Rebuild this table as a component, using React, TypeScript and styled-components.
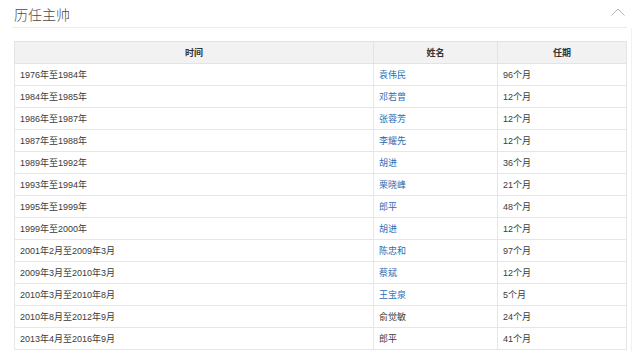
import React from "react";
import styled, { createGlobalStyle } from "styled-components";

const GlobalStyle = createGlobalStyle`
  html, body {
    margin: 0;
    padding: 0;
    background: #ffffff;
  }
  body {
    font-family: "Liberation Sans", Arial, "Noto Sans CJK SC", sans-serif;
    color: #333333;
  }
`;

const Page = styled.div`
  width: 619px;
  padding-left: 12px;
`;

const Header = styled.div`
  display: flex;
  align-items: center;
  justify-content: space-between;
  width: 615px;
  height: 28px;
  box-sizing: border-box;
  padding: 0 2px 0 2px;
  border-bottom: 1px solid #ececec;
`;

const Title = styled.h2`
  margin: 0;
  font-size: 14px;
  line-height: 24px;
  font-weight: 300;
  color: #4a4a4a;
  font-family: "Noto Sans CJK SC", sans-serif;
`;

const Toggle = styled.button`
  display: flex;
  align-items: center;
  border: 0;
  padding: 0;
  margin: 0 0 4px 0;
  background: transparent;
  cursor: pointer;
`;

const Body = styled.div`
  width: 617px;
  padding: 13px 0 0 2px;
  border-right: 1px solid #f2f2f2;
  min-height: 320px;
`;

const Table = styled.table`
  width: 612px;
  table-layout: fixed;
  border-collapse: collapse;
  font-size: 9px;
  font-family: "Liberation Sans", Arial, "Noto Sans CJK SC", sans-serif;
`;

const Th = styled.th`
  height: 21px;
  padding: 0 5px;
  background: #f2f2f2;
  border: 1px solid #e3e3e3;
  font-weight: bold;
  text-align: center;
  color: #333333;
`;

const Td = styled.td`
  height: 21px;
  padding: 0 4px 0 5px;
  border: 1px solid #e6e6e6;
  color: #3a3a3a;
  text-align: left;
  white-space: nowrap;
`;

const NameLink = styled.a<{ $linked: boolean }>`
  color: ${(p) => (p.$linked ? "#2d6cb4" : "#3a3a3a")};
  text-decoration: none;
`;

type Row = { period: string; name: string; linked: boolean; term: string };

const rows: Row[] = [
  { period: "1976年至1984年", name: "袁伟民", linked: true, term: "96个月" },
  { period: "1984年至1985年", name: "邓若曾", linked: true, term: "12个月" },
  { period: "1986年至1987年", name: "张蓉芳", linked: true, term: "12个月" },
  { period: "1987年至1988年", name: "李耀先", linked: true, term: "12个月" },
  { period: "1989年至1992年", name: "胡进", linked: true, term: "36个月" },
  { period: "1993年至1994年", name: "栗晓峰", linked: true, term: "21个月" },
  { period: "1995年至1999年", name: "郎平", linked: true, term: "48个月" },
  { period: "1999年至2000年", name: "胡进", linked: true, term: "12个月" },
  { period: "2001年2月至2009年3月", name: "陈忠和", linked: true, term: "97个月" },
  { period: "2009年3月至2010年3月", name: "蔡斌", linked: true, term: "12个月" },
  { period: "2010年3月至2010年8月", name: "王宝泉", linked: true, term: "5个月" },
  { period: "2010年8月至2012年9月", name: "俞觉敏", linked: false, term: "24个月" },
  { period: "2013年4月至2016年9月", name: "郎平", linked: false, term: "41个月" },
];

const Chevron = () => (
  <svg width="14" height="8" viewBox="0 0 14 8" fill="none">
    <polyline points="0.5,7.5 7,1 13.5,7.5" stroke="#b3b3b3" strokeWidth="1" />
  </svg>
);

export default function App() {
  return (
    <>
      <GlobalStyle />
      <Page>
        <Header>
          <Title>历任主帅</Title>
          <Toggle aria-label="收起">
            <Chevron />
          </Toggle>
        </Header>
        <Body>
          <Table>
            <colgroup>
              <col style={{ width: 359 }} />
              <col style={{ width: 124 }} />
              <col style={{ width: 129 }} />
            </colgroup>
            <thead>
              <tr>
                <Th>时间</Th>
                <Th>姓名</Th>
                <Th>任期</Th>
              </tr>
            </thead>
            <tbody>
              {rows.map((r, i) => (
                <tr key={i}>
                  <Td>{r.period}</Td>
                  <Td>
                    <NameLink $linked={r.linked} href={r.linked ? "#" : undefined}>
                      {r.name}
                    </NameLink>
                  </Td>
                  <Td>{r.term}</Td>
                </tr>
              ))}
            </tbody>
          </Table>
        </Body>
      </Page>
    </>
  );
}
